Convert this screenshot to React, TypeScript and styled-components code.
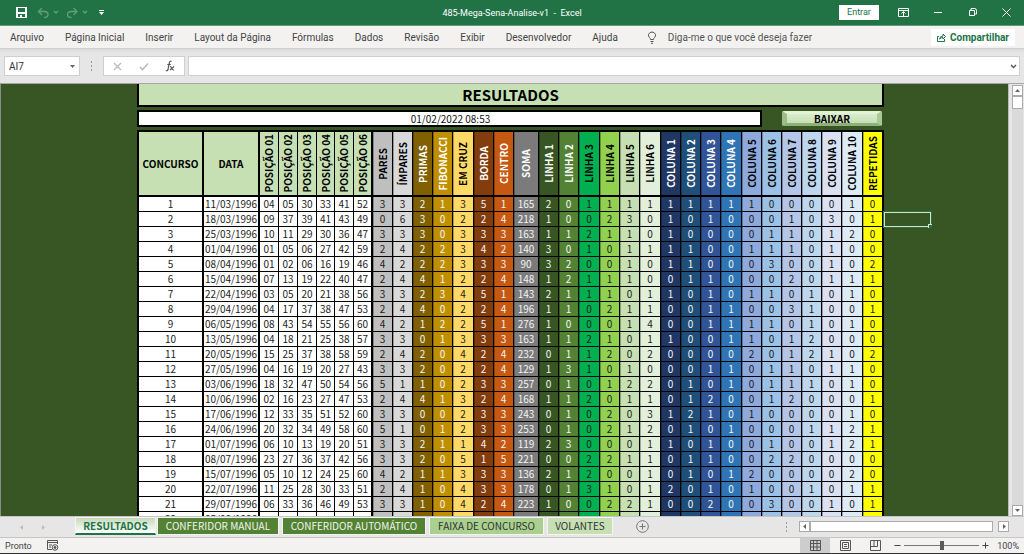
import React from "react";
import styled, { createGlobalStyle, css } from "styled-components";

const ui = `Roboto, "Noto Sans", sans-serif`;
const sheetFont = `"Noto Sans CJK SC", "Noto Sans", sans-serif`;

const Global = createGlobalStyle`
  *, *::before, *::after { box-sizing: border-box; }
  body { margin: 0; background: #e6e6e6; font-family: ${ui}; font-size: 10px; color: #444; }
  button, input { font: inherit; color: inherit; margin: 0; padding: 0; border: 0; background: none; border-radius: 0; }
  svg { display: block; }
`;

const Window = styled.div`
  display: flex;
  flex-direction: column;
  height: 100vh;
  overflow: hidden;
  border-bottom: 1px solid #333;
`;

/* ---------- title bar ---------- */
const TitleBar = styled.header`
  display: grid;
  grid-template-columns: 1fr auto 1fr;
  align-items: center;
  flex: none;
  height: 26px;
  background: #217346;
  border-bottom: 1px solid #5f9b7b;
  color: #fff;
`;
const QuickAccess = styled.div`
  display: flex;
  align-items: center;
  gap: 7px;
  padding-left: 16px;
`;
const IconButton = styled.button<{ $faded?: boolean }>`
  display: grid;
  place-items: center;
  opacity: ${(p) => (p.$faded ? 0.3 : 1)};
`;
const DocumentName = styled.h1`
  margin: 0;
  font-size: 9px;
  font-weight: 400;
  white-space: pre;
`;
const WindowControls = styled.div`
  display: flex;
  align-items: center;
  justify-content: flex-end;
  gap: 25px;
  padding-right: 13px;
`;
const SignIn = styled.button`
  width: 40px;
  height: 15px;
  margin-right: -6px;
  background: #fff;
  color: #217346;
  font-size: 9px;
  line-height: 15px;
`;

/* ---------- ribbon tabs ---------- */
const Ribbon = styled.nav`
  display: flex;
  align-items: center;
  flex: none;
  gap: 21px;
  height: 23px;
  padding: 0 9px 0 10px;
  background: #f3f2f1;
  border-bottom: 1px solid #d2d0ce;
  white-space: nowrap;
`;
const RibbonTab = styled.button`
  color: #444;
`;
const TellMe = styled.button`
  display: flex;
  align-items: center;
  gap: 11px;
  margin-left: 8px;
  color: #555;
`;
const Share = styled.button`
  display: flex;
  align-items: center;
  justify-content: center;
  gap: 4px;
  width: 84px;
  height: 17px;
  margin-left: auto;
  background: #fff;
  color: #217346;
  font-weight: 700;
`;

/* ---------- formula bar ---------- */
const FormulaBar = styled.div`
  display: flex;
  align-items: center;
  flex: none;
  height: 34px;
  padding: 0 4px;
  background: linear-gradient(#dadada, #e6e6e6 4px);
`;
const Field = styled.div`
  display: flex;
  align-items: center;
  height: 20px;
  background: #fff;
  border: 1px solid #cfcfcf;
`;
const NameBox = styled(Field)`
  width: 76px;
  padding: 0 4px;
  input { flex: 1; min-width: 0; color: #333; }
`;
const Dots = styled.span`
  display: grid;
  gap: 2px;
  i { width: 1px; height: 2px; background: #999; }
`;
const FormulaDots = styled(Dots)`
  margin: 0 11px;
`;
const FormulaActions = styled(Field)`
  justify-content: space-between;
  width: 82px;
  margin-right: 3px;
  padding: 0 9px;
`;
const FormulaField = styled(Field)`
  flex: 1;
  padding-right: 2px;
  input { flex: 1; min-width: 0; height: 100%; }
`;

/* ---------- worksheet ---------- */
const Workspace = styled.div`
  display: flex;
  flex: 1;
  min-height: 0;
  border-top: 1px solid #a6a6a6;
  border-left: 1px solid #8c8c8c;
`;
const Sheet = styled.main`
  flex: 1;
  min-width: 0;
  overflow: hidden;
  padding-left: 136px;
  background: #375623;
  font-family: ${sheetFont};
  color: #111;
`;
const Report = styled.div`
  position: relative;
  width: 747px;
`;
const ReportTitle = styled.h2`
  margin: 0 0 3px;
  height: 23px;
  border: 2px solid #000;
  border-top: 0;
  background: #c6e0b4;
  color: #000;
  font-size: 15px;
  line-height: 22px;
  text-align: center;
`;
const ReportBar = styled.div`
  display: flex;
  justify-content: space-between;
  align-items: center;
  margin-bottom: 3px;
  padding-right: 2px;
`;
const UpdatedAt = styled.time`
  width: 625px;
  height: 17px;
  border: 2px solid #000;
  background: #fff;
  font-size: 10px;
  line-height: 14px;
  text-align: center;
  padding-left: 2px;
`;
const Download = styled.button`
  width: 100px;
  height: 15px;
  border: solid;
  border-width: 3px 5px;
  border-color: #e3f3d8 #a9c996 #8fb07a #9cbf87;
  border-radius: 2px;
  background: linear-gradient(#d9ecca, #c6e0b4);
  color: #000;
  font-size: 10px;
  font-weight: 700;
  line-height: 8px;
`;
const Grid = styled.table`
  width: 747px;
  table-layout: fixed;
  border-collapse: separate;
  border-spacing: 0;
  border: solid #000;
  border-width: 2px 1px 0 2px;
  font-size: 10px;
`;
const Column = styled.col<{ $width: number }>`
  width: ${(p) => p.$width}px;
`;
type CellProps = { $bg: string; $light?: boolean; $heavy?: boolean; $tinted?: boolean };
const cell = css<CellProps>`
  padding: 0;
  border: solid #000;
  border-width: 0 ${(p) => (p.$heavy ? 2 : 1)}px 1px 0;
  background: ${(p) => p.$bg};
  color: ${(p) => (p.$light ? "#f4f4f4" : "#1c1c1c")};
  box-shadow: ${(p) => (p.$tinted ? "inset 1px 0 rgba(0,0,0,.3)" : "none")};
  text-align: center;
  white-space: nowrap;
`;
const Head = styled.th<CellProps>`
  ${cell}
  height: 65px;
  border-bottom-width: 2px;
  color: ${(p) => (p.$light ? "#fff" : "#000")};
  line-height: 14px;
`;
const Upright = styled.span`
  display: inline-block;
  writing-mode: vertical-rl;
  transform: rotate(180deg);
  vertical-align: middle;
`;
const Cell = styled.td<CellProps>`
  ${cell}
  height: 15px;
  line-height: 14px;
`;
const Selection = styled.div`
  position: absolute;
  top: 128px;
  left: 100%;
  width: 47px;
  height: 15px;
  border: 1px solid #d5e3cd;
  outline: 1px solid #217346;
  &::after {
    content: "";
    position: absolute;
    right: -2px;
    bottom: -2px;
    width: 4px;
    height: 4px;
    background: #217346;
    border: solid #d5e3cd;
    border-width: 1px 0 0 1px;
  }
`;

/* ---------- scroll bars ---------- */
const VScroll = styled.div`
  display: flex;
  flex-direction: column;
  flex: none;
  width: 16px;
  padding: 1px 1px 0 3px;
  background: #e6e6e6;
  border-left: 1px solid #bbb;
`;
const Track = styled.div`
  flex: 1;
  background: #dadada;
`;
const Arrow = styled.button`
  display: grid;
  place-items: center;
  flex: none;
  width: 11px;
  height: 11px;
  background: #fff;
  border: 1px solid #ababab;
`;
const VThumb = styled.div`
  height: 13px;
  background: #fff;
  border: 1px solid #ababab;
`;

/* ---------- sheet tabs ---------- */
const TabStrip = styled.div`
  display: flex;
  align-items: flex-start;
  flex: none;
  height: 22px;
  padding-right: 15px;
  background: #e6e6e6;
  border-top: 1px solid #c6c6c6;
  border-bottom: 1px solid #c6c6c6;
`;
const TabArrows = styled.div`
  display: flex;
  align-items: center;
  justify-content: center;
  gap: 18px;
  width: 75px;
  height: 20px;
  padding-right: 10px;
`;
const SheetTab = styled.button<{ $bg: string; $light?: boolean; $active?: boolean; $width: number }>`
  width: ${(p) => p.$width}px;
  height: 18px;
  margin-right: 3px;
  background: ${(p) => p.$bg};
  border: 1px solid #f4f4f4;
  color: ${(p) => (p.$light ? "#f0f5ec" : "#333")};
  font-family: ${sheetFont};
  line-height: 16px;
  white-space: nowrap;
  ${(p) =>
    p.$active &&
    css`
      margin-right: 1px;
      border-bottom: 2px solid #217346;
      color: #217346;
      font-weight: 700;
    `}
`;
const AddSheet = styled.button`
  margin: 3px 0 0 20px;
`;
const HScroll = styled.div`
  display: flex;
  align-items: center;
  margin: 4px 0 0 auto;
`;
const HDots = styled(Dots)`
  margin-right: 12px;
`;
const HThumb = styled.div`
  width: 183px;
  height: 11px;
  margin-right: 5px;
  background: #fff;
  border: 1px solid #ababab;
`;

/* ---------- status bar ---------- */
const StatusBar = styled.footer`
  display: flex;
  align-items: center;
  flex: none;
  height: 15px;
  padding: 0 5px;
  background: #f3f2f1;
`;
const Ready = styled.span`
  margin-right: 15px;
  font-size: 9px;
`;
const ViewButton = styled.button<{ $on?: boolean }>`
  display: grid;
  place-items: center;
  width: 30px;
  height: 15px;
  background: ${(p) => (p.$on ? "#cdcdcd" : "none")};
`;
const Views = styled.div`
  display: flex;
  margin-left: auto;
`;
const Zoom = styled.div`
  display: flex;
  align-items: center;
  gap: 3px;
  margin-left: 4px;
`;
const ZoomSlider = styled.input`
  appearance: none;
  width: 75px;
  height: 9px;
  background: linear-gradient(#777, #777) center / 100% 1px no-repeat;
  &::-webkit-slider-thumb {
    appearance: none;
    width: 4px;
    height: 9px;
    background: #5a5a5a;
  }
`;
const ZoomLevel = styled.span`
  width: 27px;
  text-align: right;
  font-size: 9px;
`;

type Col = { name: string; width: number; bg: string; head?: string; light?: boolean; heavy?: boolean };
const GREEN = "#c6e0b4";
const position = (n: number, width: number, heavy = false): Col => ({
  name: `POSIÇÃO 0${n}`, width, bg: "#fff", head: GREEN, heavy,
});
const columns: Col[] = [
  { name: "CONCURSO", width: 65, bg: "#fff", head: GREEN, heavy: true },
  { name: "DATA", width: 56, bg: "#fff", head: GREEN, heavy: true },
  position(1, 19), position(2, 19), position(3, 19), position(4, 18), position(5, 19), position(6, 19, true),
  { name: "PARES", width: 20, bg: "#bfbfbf" },
  { name: "ÍMPARES", width: 20, bg: "#d9d9d9" },
  { name: "PRIMAS", width: 20, bg: "#806000", light: true },
  { name: "FIBONACCI", width: 20, bg: "#bf8f00", light: true },
  { name: "EM CRUZ", width: 21, bg: "#ffd966" },
  { name: "BORDA", width: 20, bg: "#833c0c", light: true },
  { name: "CENTRO", width: 20, bg: "#c65911", light: true },
  { name: "SOMA", width: 25, bg: "#7b7b7b", light: true },
  { name: "LINHA 1", width: 20, bg: "#375623", light: true },
  { name: "LINHA 2", width: 20, bg: "#548235", light: true },
  { name: "LINHA 3", width: 21, bg: "#00b050" },
  { name: "LINHA 4", width: 20, bg: "#92d050" },
  { name: "LINHA 5", width: 20, bg: "#c6e0b4" },
  { name: "LINHA 6", width: 21, bg: "#e2efda" },
  { name: "COLUNA 1", width: 20, bg: "#203764", light: true },
  { name: "COLUNA 2", width: 20, bg: "#1f4e78", light: true },
  { name: "COLUNA 3", width: 20, bg: "#305496", light: true },
  { name: "COLUNA 4", width: 21, bg: "#2f75b5", light: true },
  { name: "COLUNA 5", width: 20, bg: "#8ea9db" },
  { name: "COLUNA 6", width: 20, bg: "#9bc2e6" },
  { name: "COLUNA 7", width: 20, bg: "#b4c6e7" },
  { name: "COLUNA 8", width: 20, bg: "#bdd7ee" },
  { name: "COLUNA 9", width: 20, bg: "#d9e1f2" },
  { name: "COLUNA 10", width: 21, bg: "#ddebf7" },
  { name: "REPETIDAS", width: 20, bg: "#ffff00" },
];

const draws = [
  "11/03/1996 04 05 30 33 41 52 3 3 2 1 3 5 1 165 2 0 1 1 1 1 1 1 1 1 1 0 0 0 0 1 0",
  "18/03/1996 09 37 39 41 43 49 0 6 3 0 2 2 4 218 1 0 0 2 3 0 1 0 1 0 0 0 1 0 3 0 1",
  "25/03/1996 10 11 29 30 36 47 3 3 3 0 3 3 3 163 1 1 2 1 1 0 1 0 0 0 0 1 1 0 1 2 0",
  "01/04/1996 01 05 06 27 42 59 2 4 2 2 3 4 2 140 3 0 1 0 1 1 1 1 0 0 1 1 1 0 1 0 0",
  "08/04/1996 01 02 06 16 19 46 4 2 2 2 3 3 3 90 3 2 0 0 1 0 1 1 0 0 0 3 0 0 1 0 2",
  "15/04/1996 07 13 19 22 40 47 2 4 4 1 2 2 4 148 1 2 1 1 1 0 0 1 1 0 0 0 2 0 1 1 1",
  "22/04/1996 03 05 20 21 38 56 3 3 2 3 4 5 1 143 2 1 1 1 0 1 1 0 1 0 1 1 0 1 0 1 0",
  "29/04/1996 04 17 37 38 47 53 2 4 4 0 2 2 4 196 1 1 0 2 1 1 0 0 1 1 0 0 3 1 0 0 1",
  "06/05/1996 08 43 54 55 56 60 4 2 1 2 2 5 1 276 1 0 0 0 1 4 0 0 1 1 1 1 0 1 0 1 0",
  "13/05/1996 04 18 21 25 38 57 3 3 0 1 3 3 3 163 1 1 2 1 0 1 1 0 0 1 1 0 1 2 0 0 0",
  "20/05/1996 15 25 37 38 58 59 2 4 2 0 4 2 4 232 0 1 1 2 0 2 0 0 0 0 2 0 1 2 1 0 2",
  "27/05/1996 04 16 19 20 27 43 3 3 2 0 2 2 4 129 1 3 1 0 1 0 0 0 1 1 0 1 1 0 1 1 0",
  "03/06/1996 18 32 47 50 54 56 5 1 1 0 2 3 3 257 0 1 0 1 2 2 0 1 0 1 0 1 1 1 0 1 0",
  "10/06/1996 02 16 23 27 47 53 2 4 4 1 3 2 4 168 1 1 2 0 1 1 0 1 2 0 0 1 2 0 0 0 1",
  "17/06/1996 12 33 35 51 52 60 3 3 0 0 2 3 3 243 0 1 0 2 0 3 1 2 1 0 1 0 0 0 0 1 0",
  "24/06/1996 20 32 34 49 58 60 5 1 0 1 2 3 3 253 0 1 0 2 1 2 0 1 0 1 0 0 0 1 1 2 1",
  "01/07/1996 06 10 13 19 20 51 3 3 2 1 1 4 2 119 2 3 0 0 0 1 1 0 1 0 0 1 0 0 1 2 1",
  "08/07/1996 23 27 36 37 42 56 3 3 2 0 5 1 5 221 0 0 2 2 1 1 0 1 1 0 0 2 2 0 0 0 0",
  "15/07/1996 05 10 12 24 25 60 4 2 1 1 3 3 3 136 2 1 2 0 0 1 0 1 0 1 2 0 0 0 0 2 0",
  "22/07/1996 11 25 28 30 33 51 2 4 1 0 4 3 3 178 0 1 3 1 0 1 2 0 1 0 1 0 0 1 0 1 1",
  "29/07/1996 06 33 36 46 49 53 3 3 1 0 4 2 4 223 1 0 0 2 2 1 0 0 2 0 0 3 0 0 1 0 1",
  "05/08/1996",
].map((line, i) => [String(i + 1), ...line.split(" ")]);

const menu = ["Arquivo", "Página Inicial", "Inserir", "Layout da Página", "Fórmulas", "Dados", "Revisão", "Exibir", "Desenvolvedor", "Ajuda"];

const sheets = [
  { name: "RESULTADOS", width: 81, bg: "linear-gradient(#c6d9ba, #fff)", active: true },
  { name: "CONFERIDOR MANUAL", width: 122, bg: "#548235", light: true },
  { name: "CONFERIDOR AUTOMÁTICO", width: 144, bg: "#548235", light: true },
  { name: "FAIXA DE CONCURSO", width: 115, bg: "#a9d08e" },
  { name: "VOLANTES", width: 66, bg: "#c6e0b4" },
];

const Stroke = ({ d, w = 11, h = 11, s = 1, color = "currentColor" }: { d: string; w?: number; h?: number; s?: number; color?: string }) => (
  <svg width={w} height={h} viewBox={`0 0 ${w} ${h}`} fill="none" stroke={color} strokeWidth={s} aria-hidden="true">
    <path d={d} />
  </svg>
);
const Solid = ({ d, w = 5, h = 5, color = "#666" }: { d: string; w?: number; h?: number; color?: string }) => (
  <svg width={w} height={h} viewBox={`0 0 ${w} ${h}`} fill={color} aria-hidden="true">
    <path d={d} />
  </svg>
);

export default function App() {
  return (
    <Window>
      <Global />
      <TitleBar>
        <QuickAccess>
          <IconButton aria-label="Salvar">
            <svg width="11" height="11" viewBox="0 0 11 11" aria-hidden="true">
              <path fill="#fff" fillRule="evenodd" d="M0 0h11v11H0zM2 1v4h7V1zM2 7v3h2V8h2v2h3V7z" />
            </svg>
          </IconButton>
          <IconButton aria-label="Desfazer" $faded>
            <Stroke w={25} h={12} s={1.3} d="M8 1L4.500 4.500L8 8M4.500 4.500H10.500Q14 4.500 14 7.500Q14 10.500 10 10.500M20 4l2 2l2-2" />
          </IconButton>
          <IconButton aria-label="Refazer" $faded>
            <Stroke w={22} h={12} s={1.3} d="M7.500 1L11 4.500L7.500 8M11 4.500H5.500Q1.500 4.500 1.500 7.500Q1.500 10.500 5.500 10.500M17 4l2 2l2-2" />
          </IconButton>
          <IconButton aria-label="Personalizar barra">
            <Solid w={12} h={6} color="#fff" d="M4 0h5v1H4zM4 2h5L6.500 5z" />
          </IconButton>
        </QuickAccess>
        <DocumentName>{"485-Mega-Sena-Analise-v1  -  Excel"}</DocumentName>
        <WindowControls>
          <SignIn>Entrar</SignIn>
          <IconButton aria-label="Opções da faixa">
            <Stroke w={11} h={9} d="M.5.5h10v8H.5zM.5 2.500h10M5.500 8V4M3.500 5.500L5.500 3.500l2 2" />
          </IconButton>
          <IconButton aria-label="Minimizar"><Stroke w={9} h={9} d="M0 4.500h8" /></IconButton>
          <IconButton aria-label="Restaurar">
            <Stroke w={9} h={9} d="M1.500 2.500h5v5h-5zM3 2.500V.5h3.500Q8.500.5 8.500 2.500V6H6.500" />
          </IconButton>
          <IconButton aria-label="Fechar"><Stroke w={9} h={9} d="M.5.5l8 8M8.500.5l-8 8" /></IconButton>
        </WindowControls>
      </TitleBar>

      <Ribbon aria-label="Faixa de opções">
        {menu.map((m) => <RibbonTab key={m}>{m}</RibbonTab>)}
        <TellMe>
          <Stroke w={10} h={13} d="M3.500 8.500Q3.500 7.500 2.500 6.500Q1 5 1.500 3.500Q2.500 1 5 1T8.500 3.500Q9 5 7.500 6.500Q6.500 7.500 6.500 8.500ZM3.500 10.500h3M4 12.300h2" />
          Diga-me o que você deseja fazer
        </TellMe>
        <Share>
          <Stroke w={9} h={9} d="M2 3.500H.5v5h7V6M2.500 6Q3 3 6 3V1l2.500 2.500L6 6V4.500Q4 4.500 2.500 6z" />
          Compartilhar
        </Share>
      </Ribbon>

      <FormulaBar>
        <NameBox>
          <input aria-label="Caixa de nome" defaultValue="AI7" />
          <IconButton aria-label="Abrir lista de nomes"><Solid d="M0 1h5L2.500 4z" /></IconButton>
        </NameBox>
        <FormulaDots><i /><i /><i /></FormulaDots>
        <FormulaActions>
          <IconButton aria-label="Cancelar"><Stroke w={9} h={9} color="#bbb" s={1.3} d="M1 1l7 7M8 1l-7 7" /></IconButton>
          <IconButton aria-label="Inserir"><Stroke w={10} h={9} color="#bbb" s={1.6} d="M1 5l2.500 2.500L9 1.500" /></IconButton>
          <IconButton aria-label="Inserir função">
            <Stroke w={10} h={12} color="#555" s={1.2} d="M6.500 1.500Q4.800.5 4.300 3L3 9.500Q2.500 11.300.8 10.500M2.300 4.500h3.500M5 6.500q1.200 0 1.700 1.800T9 10M9 6.500L5 10" />
          </IconButton>
        </FormulaActions>
        <FormulaField>
          <input aria-label="Barra de fórmulas" />
          <IconButton aria-label="Expandir"><Stroke w={7} h={5} s={1.4} color="#555" d="M1 1l2.500 2.500L6 1" /></IconButton>
        </FormulaField>
      </FormulaBar>

      <Workspace>
        <Sheet>
          <Report>
            <ReportTitle>RESULTADOS</ReportTitle>
            <ReportBar>
              <UpdatedAt>01/02/2022 08:53</UpdatedAt>
              <Download>BAIXAR</Download>
            </ReportBar>
            <Grid>
              <colgroup>{columns.map((c) => <Column key={c.name} $width={c.width} />)}</colgroup>
              <thead>
                <tr>
                  {columns.map((c, i) => (
                    <Head key={c.name} scope="col" $bg={c.head ?? c.bg} $light={c.light} $heavy={c.heavy} $tinted={i > 7}>
                      {i < 2 ? c.name : <Upright>{c.name}</Upright>}
                    </Head>
                  ))}
                </tr>
              </thead>
              <tbody>
                {draws.map((row) => (
                  <tr key={row[0]}>
                    {columns.map((c, i) => (
                      <Cell key={c.name} $bg={c.bg} $light={c.light} $heavy={c.heavy} $tinted={i > 7}>{row[i]}</Cell>
                    ))}
                  </tr>
                ))}
              </tbody>
            </Grid>
            <Selection />
          </Report>
        </Sheet>
        <VScroll>
          <Arrow aria-label="Rolar para cima"><Solid d="M0 4h5L2.500 1z" /></Arrow>
          <VThumb />
          <Track />
          <Arrow aria-label="Rolar para baixo"><Solid d="M0 1h5L2.500 4z" /></Arrow>
        </VScroll>
      </Workspace>

      <TabStrip>
        <TabArrows>
          <IconButton aria-label="Planilha anterior"><Solid w={4} color="#bbb" d="M3 0v5L0 2.500z" /></IconButton>
          <IconButton aria-label="Próxima planilha"><Solid w={4} color="#bbb" d="M0 0v5L3 2.500z" /></IconButton>
        </TabArrows>
        {sheets.map((s) => (
          <SheetTab key={s.name} $bg={s.bg} $light={s.light} $active={s.active} $width={s.width}>{s.name}</SheetTab>
        ))}
        <AddSheet aria-label="Nova planilha">
          <Stroke w={13} h={13} color="#777" d="M6.500.7a5.800 5.800 0 1 0 .01 0zM6.500 3.500v6M3.500 6.500h6" />
        </AddSheet>
        <HScroll>
          <HDots><i /><i /><i /></HDots>
          <Arrow aria-label="Rolar para a esquerda"><Solid w={4} d="M3 0v5L0 2.500z" /></Arrow>
          <HThumb />
          <Arrow aria-label="Rolar para a direita"><Solid w={4} d="M1 0v5L4 2.500z" /></Arrow>
        </HScroll>
      </TabStrip>

      <StatusBar>
        <Ready>Pronto</Ready>
        <IconButton aria-label="Gravar macro">
          <svg width="12" height="11" viewBox="0 0 12 11" fill="none" stroke="#555" aria-hidden="true">
            <path d="M10.500 4V.5H.5v9H5M.5 2.500h10M2 5h3M2 7h2" />
            <circle cx="8" cy="7.500" r="2.800" />
            <circle cx="8" cy="7.500" r="1" fill="#555" />
          </svg>
        </IconButton>
        <Views>
          <ViewButton $on aria-label="Normal"><Stroke color="#555" d="M.5.5h10v10H.5zM3.500.5v10M7 .5v10M.5 3.500h10M.5 7h10" /></ViewButton>
          <ViewButton aria-label="Layout da página"><Stroke color="#555" d="M.5.5h10v10H.5zM2.500 2.500h6v6h-6zM4 4.500h3M4 6.500h3" /></ViewButton>
          <ViewButton aria-label="Quebra de página"><Stroke color="#555" d="M.5.5h10v10H.5zM.5 6.500h7v-6M4 .5v6" /></ViewButton>
        </Views>
        <Zoom>
          <IconButton aria-label="Reduzir"><Stroke w={7} h={7} d="M.5 3.500h6" /></IconButton>
          <ZoomSlider type="range" aria-label="Zoom" min={0} max={200} defaultValue={100} />
          <IconButton aria-label="Ampliar"><Stroke w={7} h={7} d="M.5 3.500h6M3.500.5v6" /></IconButton>
          <ZoomLevel>100%</ZoomLevel>
        </Zoom>
      </StatusBar>
    </Window>
  );
}
